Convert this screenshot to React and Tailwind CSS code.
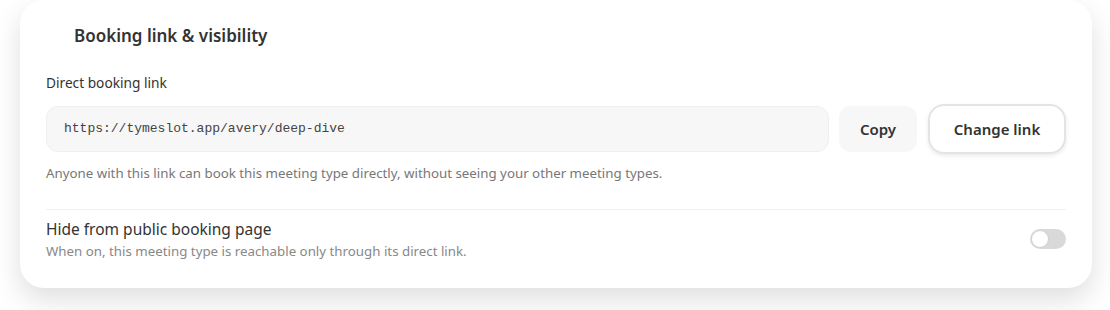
import React from "react";

function Toggle() {
  return (
    <button
      type="button"
      className="relative h-[20px] w-[36px] shrink-0 rounded-full bg-[#d9d9d9]"
    >
      <span className="absolute left-[1px] top-[1px] h-[18px] w-[18px] rounded-full border border-[#d0d0d0] bg-white" />
    </button>
  );
}

export default function App() {
  return (
    <div className="min-h-[310px] bg-white pl-5 pr-[18px] font-['Noto_Sans',sans-serif] text-[#333]">
      <div className="rounded-[24px] bg-white pb-[28px] pl-[26px] pr-[26px] pt-[24px] shadow-[0_12px_28px_rgba(0,0,0,0.13)]">
        <h2 className="pl-7 text-[17px] font-semibold leading-[24px] text-[#333]">
          Booking link &amp; visibility
        </h2>

        <p className="mt-[25px] text-[13.7px] leading-[20px] text-[#333]">
          Direct booking link
        </p>
        <div className="mt-[11px] flex items-center">
          <div className="flex h-[46px] flex-1 items-center rounded-[12px] border border-[#efefef] bg-[#f7f7f7] px-[17px] font-['Liberation_Mono',monospace] text-[13px] text-[#444]">
            https://tymeslot.app/avery/deep-dive
          </div>
          <button
            type="button"
            className="ml-[10px] h-[46px] w-[78px] rounded-[12px] bg-[#f7f7f7] text-[15px] font-semibold text-[#333]"
          >
            Copy
          </button>
          <button
            type="button"
            className="ml-[11px] h-[50px] w-[138px] rounded-[16px] border-2 border-[#e4e4e4] bg-white text-[15px] font-semibold text-[#333] shadow-[0_2px_4px_rgba(0,0,0,0.08)]"
          >
            Change link
          </button>
        </div>
        <p className="mt-[10px] text-[13.3px] leading-[18px] text-[#777]">
          Anyone with this link can book this meeting type directly, without
          seeing your other meeting types.
        </p>

        <div className="mt-[27px] border-t border-[#f0f0f0]" />

        <div className="mt-[8px] flex items-center justify-between">
          <div>
            <p className="text-[15.5px] leading-[22px] text-[#333]">
              Hide from public booking page
            </p>
            <p className="mt-[2px] text-[13.3px] leading-[18px] text-[#888]">
              When on, this meeting type is reachable only through its direct
              link.
            </p>
          </div>
          <Toggle />
        </div>
      </div>
    </div>
  );
}
